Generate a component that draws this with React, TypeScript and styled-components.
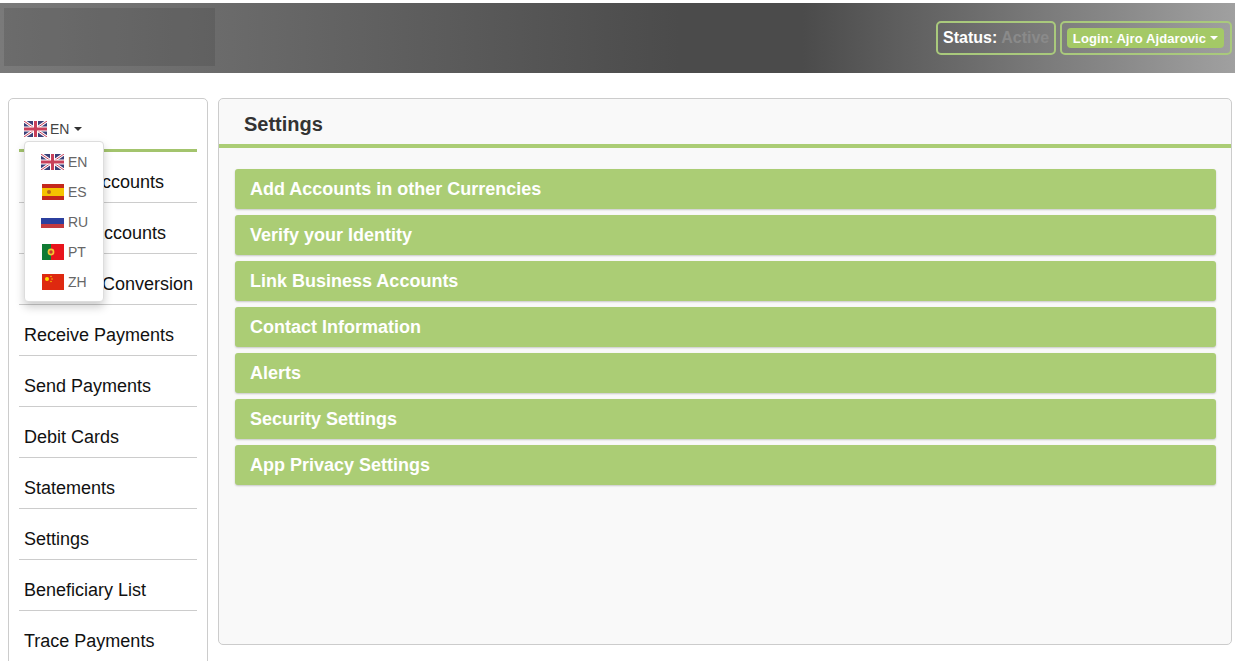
import React from 'react';
import styled, { createGlobalStyle } from 'styled-components';

const GlobalStyle = createGlobalStyle`
  html, body {
    margin: 0;
    padding: 0;
    height: 100%;
    overflow: hidden;
    background: #fff;
    font-family: "Liberation Sans", Arial, sans-serif;
  }
  * { box-sizing: border-box; }
`;

const Page = styled.div`
  height: 661px;
  overflow: hidden;
  padding-top: 3px;
  background: #fff;
`;

const Header = styled.header`
  height: 70px;
  display: flex;
  align-items: flex-start;
  justify-content: space-between;
  padding: 5px 3px 0 4px;
  background: linear-gradient(to right, #7a7a7a 0%, #4b4b4b 55%, #4b4b4b 65%, #a0a0a0 100%);
`;

const LogoBlock = styled.div`
  width: 211px;
  height: 58px;
  background: rgba(60, 60, 60, 0.22);
`;

const HeaderRight = styled.div`
  display: flex;
  gap: 4px;
  margin-top: 13px;
`;

const StatusBox = styled.div`
  width: 120px;
  height: 34px;
  border: 2px solid #a9c97c;
  border-radius: 5px;
  display: flex;
  align-items: center;
  padding-left: 5px;
  font-size: 16px;
  font-weight: bold;
  color: #fff;
  white-space: nowrap;
`;

const StatusValue = styled.span`
  color: #8a8a8a;
  margin-left: 4px;
`;

const LoginBox = styled.div`
  width: 172px;
  height: 34px;
  border: 2px solid #a9c97c;
  border-radius: 5px;
  display: flex;
  align-items: center;
  padding-left: 5px;
`;

const LoginButton = styled.div`
  width: 157px;
  height: 20px;
  background: #a4c966;
  border-radius: 4px;
  display: flex;
  align-items: center;
  justify-content: center;
  gap: 4px;
  font-size: 13px;
  letter-spacing: 0.1px;
  font-weight: bold;
  color: #fff;
  white-space: nowrap;
`;

const Caret = styled.span<{ $color: string }>`
  display: inline-block;
  width: 0;
  height: 0;
  border-left: 4px solid transparent;
  border-right: 4px solid transparent;
  border-top: 4px solid ${p => p.$color};
`;

const Content = styled.div`
  display: flex;
  align-items: flex-start;
  gap: 10px;
  padding: 25px 3px 0 8px;
`;

const Sidebar = styled.aside`
  position: relative;
  width: 200px;
  height: 640px;
  flex: none;
  border: 1px solid #ccc;
  border-radius: 5px;
  background: #fff;
  padding: 0 10px;
`;

const LangToggle = styled.div`
  height: 53px;
  border-bottom: 3px solid #a3c46d;
  display: flex;
  align-items: center;
  padding: 9px 0 0 5px;
  gap: 4px;
  font-size: 14px;
  color: #444;
`;

const LangLabel = styled.span`
  margin: 0 1px 0 -1px;
`;

const NavItem = styled.div`
  height: 51px;
  border-bottom: 1px solid #ccc;
  padding: 20px 0 0 5px;
  font-size: 18px;
  line-height: 20px;
  color: #111;
  white-space: nowrap;
`;

const LangMenu = styled.div`
  position: absolute;
  left: 15px;
  top: 42px;
  width: 80px;
  height: 161px;
  padding: 5px 0;
  background: #fff;
  border: 1px solid #ddd;
  border-radius: 4px;
  box-shadow: 0 5px 10px rgba(0, 0, 0, 0.2);
`;

const LangRow = styled.div`
  height: 30px;
  display: flex;
  align-items: center;
  gap: 4px;
  padding-left: 16px;
  font-size: 14px;
  color: #666;
`;

const Panel = styled.main`
  flex: 1;
  height: 547px;
  border: 1px solid #ccc;
  border-radius: 5px;
  background: #f9f9f9;
`;

const PanelHead = styled.div`
  height: 49px;
  border-bottom: 4px solid #abcd75;
  padding: 13px 0 0 25px;
  font-size: 20px;
  line-height: 24px;
  font-weight: bold;
  color: #333;
`;

const RowList = styled.div`
  display: flex;
  flex-direction: column;
  gap: 6px;
  padding: 21px 15px 0 16px;
`;

const Row = styled.div`
  height: 40px;
  padding-left: 15px;
  display: flex;
  align-items: center;
  background: #abcd75;
  border-radius: 3px;
  box-shadow: 0 1px 2px rgba(0, 0, 0, 0.2);
  font-size: 18px;
  font-weight: bold;
  color: #fff;
`;

const FlagSvg = styled.svg<{ $inset?: boolean }>`
  flex: none;
  display: block;
  margin-left: ${p => (p.$inset ? '1px' : '0')};
`;

const FlagUK = () => (
  <FlagSvg width="23" height="16" viewBox="0 0 23 16">
    <rect width="23" height="16" fill="#3b3f78" />
    <path d="M0 0L23 16M23 0L0 16" stroke="#fff" strokeWidth="3" />
    <path d="M0 0L23 16M23 0L0 16" stroke="#c8405a" strokeWidth="1" />
    <path d="M11.5 0V16M0 8H23" stroke="#fff" strokeWidth="5" />
    <path d="M11.5 0V16M0 8H23" stroke="#c8405a" strokeWidth="3" />
  </FlagSvg>
);

const FlagES = () => (
  <FlagSvg $inset width="22" height="16" viewBox="0 0 22 16">
    <rect width="22" height="16" fill="#c4281c" />
    <rect y="4" width="22" height="8" fill="#f5c400" />
    <circle cx="7" cy="8" r="2" fill="#b5651d" />
  </FlagSvg>
);

const FlagRU = () => (
  <FlagSvg width="23" height="11" viewBox="0 0 23 11">
    <rect width="23" height="1" fill="#fff" />
    <rect y="1" width="23" height="6" fill="#2b3f9e" />
    <rect y="7" width="23" height="4" fill="#c33a3f" />
  </FlagSvg>
);

const FlagPT = () => (
  <FlagSvg $inset width="22" height="16" viewBox="0 0 22 16">
    <rect width="22" height="16" fill="#e8141c" />
    <rect width="9" height="16" fill="#0f7a33" />
    <circle cx="9" cy="8" r="3.4" fill="#f2c430" />
    <circle cx="9" cy="8" r="1.7" fill="#c8362a" />
  </FlagSvg>
);

const FlagZH = () => (
  <FlagSvg $inset width="22" height="16" viewBox="0 0 22 16">
    <rect width="22" height="16" fill="#de2910" />
    <circle cx="5" cy="5" r="2" fill="#ffde00" />
    <circle cx="9" cy="2.5" r="0.7" fill="#ffde00" />
    <circle cx="10" cy="5" r="0.7" fill="#ffde00" />
    <circle cx="9" cy="7.5" r="0.7" fill="#ffde00" />
  </FlagSvg>
);

const navItems = [
  'Primary Accounts',
  'Savings Accounts',
  'Currency Conversion',
  'Receive Payments',
  'Send Payments',
  'Debit Cards',
  'Statements',
  'Settings',
  'Beneficiary List',
  'Trace Payments',
];

const languages = [
  { code: 'EN', flag: <FlagUK /> },
  { code: 'ES', flag: <FlagES /> },
  { code: 'RU', flag: <FlagRU /> },
  { code: 'PT', flag: <FlagPT /> },
  { code: 'ZH', flag: <FlagZH /> },
];

const settingsRows = [
  'Add Accounts in other Currencies',
  'Verify your Identity',
  'Link Business Accounts',
  'Contact Information',
  'Alerts',
  'Security Settings',
  'App Privacy Settings',
];

const App = () => {
  return (
    <>
      <GlobalStyle />
      <Page>
        <Header>
          <LogoBlock />
          <HeaderRight>
            <StatusBox>
              Status:<StatusValue>Active</StatusValue>
            </StatusBox>
            <LoginBox>
              <LoginButton>
                Login: Ajro Ajdarovic <Caret $color="#fff" />
              </LoginButton>
            </LoginBox>
          </HeaderRight>
        </Header>
        <Content>
          <Sidebar>
            <LangToggle>
              <FlagUK />
              <LangLabel>EN</LangLabel>
              <Caret $color="#333" />
            </LangToggle>
            {navItems.map(item => (
              <NavItem key={item}>{item}</NavItem>
            ))}
            <LangMenu>
              {languages.map(lang => (
                <LangRow key={lang.code}>
                  {lang.flag}
                  {lang.code}
                </LangRow>
              ))}
            </LangMenu>
          </Sidebar>
          <Panel>
            <PanelHead>Settings</PanelHead>
            <RowList>
              {settingsRows.map(row => (
                <Row key={row}>{row}</Row>
              ))}
            </RowList>
          </Panel>
        </Content>
      </Page>
    </>
  );
};

export default App;
